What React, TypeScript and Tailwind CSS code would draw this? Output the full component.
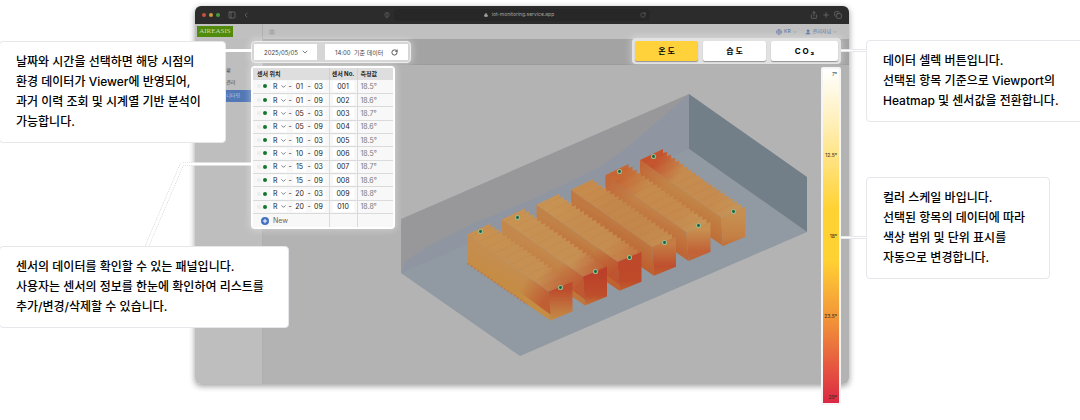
import { useState, type ReactNode } from 'react';
import {
  ChevronDown,
  ChevronLeft,
  Copy,
  Globe,
  Lock,
  Menu,
  PanelLeft,
  Plus,
  RotateCw,
  Share,
  ShieldHalf,
  User,
} from 'lucide-react';

interface Sensor {
  no: string;
  row: string;
  col: string;
  value: string;
}

const sensors: Sensor[] = [
  { no: '001', row: '01', col: '03', value: '18.5°' },
  { no: '002', row: '01', col: '09', value: '18.6°' },
  { no: '003', row: '05', col: '03', value: '18.7°' },
  { no: '004', row: '05', col: '09', value: '18.6°' },
  { no: '005', row: '10', col: '03', value: '18.5°' },
  { no: '006', row: '10', col: '09', value: '18.5°' },
  { no: '007', row: '15', col: '03', value: '18.7°' },
  { no: '008', row: '15', col: '09', value: '18.6°' },
  { no: '009', row: '20', col: '03', value: '18.8°' },
  { no: '010', row: '20', col: '09', value: '18.8°' },
];

const metrics = [
  { id: 'temperature', label: '온 도' },
  { id: 'humidity', label: '습 도' },
  { id: 'co2', label: 'C O ₂' },
];

const scaleLabels = ['7°', '12.5°', '18°', '23.5°', '29°'];

// rear block first, so that nearer blocks are painted over it
const blocks = [
  { back: '#c4532e', mid: '#c68b4e', front: '#c79457', side: '#c28548', faceTop: '#c68f50', faceBottom: '#c58045', base: '#bf7038' },
  { back: '#c66734', mid: '#c68a4d', front: '#c79457', side: '#c28146', faceTop: '#c78f50', faceBottom: '#c26236', base: '#bf6636' },
  { back: '#c78c4d', mid: '#c4874b', front: '#c58d50', side: '#bf7941', faceTop: '#c47c43', faceBottom: '#bf4f2e', base: '#be6131' },
  { back: '#c89352', mid: '#c68d50', front: '#c47742', side: '#c18247', faceTop: '#bd482b', faceBottom: '#be4a29', base: '#c0622f' },
  { back: '#c89352', mid: '#c69053', front: '#c16239', side: '#c4884c', faceTop: '#bb4029', faceBottom: '#be4f2c', base: '#c1763a' },
  { back: '#c8914f', mid: '#c69052', front: '#c1673b', side: '#c58d4e', faceTop: '#bd4b2c', faceBottom: '#c27a41', base: '#c58c42' },
];

const markers = [
  [653, 156], [619, 171], [517, 217], [480, 231], [733, 211],
  [698, 225], [664, 242], [629, 257], [595, 271], [560, 287],
];

const TEETH = 20;

// stepped edge that runs from the rear corner to the front right corner
function steppedEdge() {
  const points: string[] = [];
  for (let i = 0; i <= TEETH; i++) {
    const x = 663 + (82 * i) / TEETH;
    const y = 149 + (58 * i) / TEETH;
    points.push(`${x},${y}`);
    if (i < TEETH) points.push(`${x},${y + 4}`);
  }
  return points.join(' ');
}

function Heatmap() {
  const edge = steppedEdge();

  return (
    <svg
      viewBox="263 65 586 319"
      preserveAspectRatio="xMidYMid meet"
      className="absolute inset-0 h-full w-full"
      role="img"
      aria-label="온도 히트맵"
    >
      <defs>
        {blocks.map((b, i) => (
          <g key={i}>
            <linearGradient id={`top${i}`} gradientUnits="userSpaceOnUse" x1="650" y1="152" x2="735" y2="214">
              <stop offset="0.1" stopColor={b.back} />
              <stop offset="0.35" stopColor={b.mid} />
              <stop offset="0.75" stopColor={b.mid} />
              <stop offset="1" stopColor={b.front} />
            </linearGradient>
            <linearGradient id={`side${i}`} gradientUnits="userSpaceOnUse" x1="690" y1="190" x2="676" y2="216">
              <stop offset="0.2" stopColor={b.side} />
              <stop offset="1" stopColor={b.base} />
            </linearGradient>
            <linearGradient id={`face${i}`} x1="0" y1="0" x2="0" y2="1">
              <stop offset="0.2" stopColor={b.faceTop} />
              <stop offset="0.75" stopColor={b.faceBottom} />
              <stop offset="1" stopColor={b.base} />
            </linearGradient>
          </g>
        ))}
        <linearGradient id="heat" gradientUnits="userSpaceOnUse" x1="700" y1="202" x2="723" y2="217">
          <stop offset="0" stopColor="#bd4a2c" stopOpacity="0" />
          <stop offset="1" stopColor="#bd4a2c" stopOpacity="0.7" />
        </linearGradient>
        <linearGradient id="backHeat" gradientUnits="userSpaceOnUse" x1="640" y1="165" x2="668" y2="185">
          <stop offset="0" stopColor="#c25a30" stopOpacity="0.7" />
          <stop offset="1" stopColor="#c25a30" stopOpacity="0" />
        </linearGradient>
      </defs>

      {/* room */}
      <polygon points="401,219 689,94 689,149 401,273" fill="#98989b" />
      <polygon points="689,94 630,145 600,167 533,199 470,225 432,244 405,261 401,273 520,300 689,149" fill="#8f96a1" />
      <polygon points="401,273 689,149 807,232 520,356" fill="#9199a3" />
      <polygon points="689,94 807,177 807,232 689,149" fill="#727f88" />

      {/* rack blocks */}
      {blocks.map((b, i) => (
        <g key={i} transform={`translate(${-34.5 * i} ${14.9 * i})`}>
          <polygon points="640,160 721,217 723,246 640,189" fill={`url(#side${i})`} />
          <polygon points="721,217 745,207 745,237 723,246" fill={`url(#face${i})`} />
          <polygon points={`640,160 ${edge} 721,217`} fill={`url(#top${i})`} />
          {i > 2 && <polygon points="690,195 721,217 723,240 690,216" fill="url(#heat)" />}
          {i < 2 && <polygon points="640,160 675,184 675,206 640,183" fill="url(#backHeat)" />}
          {Array.from({ length: 20 }, (_, n) => (
            <path
              key={n}
              d={`M${643 + n * 4} ${162 + n * 2.8} l21 -10`}
              stroke={n % 2 ? '#d09a5b' : '#a9602f'}
              strokeWidth="0.7"
              opacity="0.12"
            />
          ))}
          <path d="M640 189 L700 230" stroke="#c45a2c" strokeWidth="2" strokeDasharray="2 2" opacity="0.35" />
        </g>
      ))}

      {markers.map(([x, y]) => (
        <g key={`${x}-${y}`}>
          <circle cx={x + 0.5} cy={y + 0.5} r="2.6" fill="#9fb889" />
          <circle cx={x + 0.5} cy={y + 0.5} r="1.4" fill="#126345" />
        </g>
      ))}
    </svg>
  );
}

function Callout({ lines, className = '' }: { lines: string[]; className?: string }) {
  return (
    <p
      className={`w-max rounded border border-gray-200 bg-white py-[10px] pl-4 text-xs leading-5 font-medium whitespace-nowrap text-black ${className}`}
    >
      {lines.map((line) => (
        <span key={line} className="block">
          {line}
        </span>
      ))}
    </p>
  );
}

function TitleBar() {
  return (
    <div className="flex h-[18px] items-center rounded-t-md bg-[#2c2c2c] px-[7px] text-[#757575]">
      <div className="flex flex-1 items-center">
        <div className="flex gap-[3px]">
          <span className="size-1 rounded-full bg-[#c9513f]" />
          <span className="size-1 rounded-full bg-[#c99a35]" />
          <span className="size-1 rounded-full bg-[#459b40]" />
        </div>
        <PanelLeft className="ml-2 size-2" />
        <ChevronLeft className="ml-[6px] size-2" />
        <ShieldHalf className="mr-1 ml-auto size-[6px]" />
      </div>
      <div className="flex h-3 w-[40%] items-center rounded-sm bg-[#272727] px-1">
        <div className="flex flex-1 items-center justify-center gap-1 text-[5px] text-[#a5a5a5]">
          <Lock className="size-1" fill="currentColor" />
          iot-monitoring.service.app
        </div>
        <RotateCw className="size-[6px]" />
      </div>
      <div className="flex flex-1 justify-end gap-1">
        <Share className="size-2" />
        <Plus className="size-2" />
        <Copy className="size-2" />
      </div>
    </div>
  );
}

function AppHeader() {
  return (
    <header className="flex h-[15px] items-center bg-[#c0c0c0] text-[5px] text-[#5671a5]">
      <div className="flex h-full w-[68px] items-center border-r border-[#b0b0b0] pl-[2px]">
        <span className="flex h-[11px] w-9 items-center justify-center bg-[#508b0c] font-['Liberation_Serif'] text-[7px] text-[#c9dcae]">
          AIREASIS
        </span>
      </div>
      <Menu className="ml-[6px] size-[6px] text-[#777]" />
      <div className="ml-auto flex items-center gap-2 pr-3">
        <span className="flex items-center gap-[2px]">
          <Globe className="size-[6px]" />
          KR
          <ChevronDown className="size-1" />
        </span>
        <span className="flex items-center gap-[2px]">
          <User className="size-[6px]" fill="currentColor" />
          관리자님
          <ChevronDown className="size-1" />
        </span>
      </div>
    </header>
  );
}

function Sidebar() {
  return (
    <nav className="w-[68px] shrink-0 rounded-bl-md border-r border-[#b0b0b0] bg-[#bebebe] pt-[26px] text-[5px] text-[#444]">
      <a href="#status" className="flex h-3 items-center pl-4">센서 현황</a>
      <a href="#manage" className="flex h-3 items-center pl-4">데이터 관리</a>
      <a href="#viewer" className="mt-px flex h-3 items-center bg-[#5277b5] pl-4 text-[#b9cae7]">센서 모니터링</a>
    </nav>
  );
}

function Highlight({ children, className = '' }: { children: ReactNode; className?: string }) {
  return (
    <div className={`relative rounded-sm shadow-[0_0_6px_2px_rgba(255,255,255,0.3)] ${className}`}>
      {children}
    </div>
  );
}

function Toolbar() {
  const [metric, setMetric] = useState('temperature');

  return (
    <div className="flex h-[26px] items-start justify-between border-b border-[#9c9c9c] bg-[#a3a3a3] pr-2">
      <Highlight className="mt-[2px] -ml-3 flex gap-2 border border-[#ededed] bg-[#d6d6d6] p-[2px]">
        <label className="relative flex items-center text-[#444]">
          <select
            aria-label="날짜"
            className="h-4 w-[63px] appearance-none bg-white pl-[10px] text-[6px]"
            defaultValue="2025/05/05"
          >
            <option>2025/05/05</option>
          </select>
          <ChevronDown className="pointer-events-none absolute right-2 size-2" />
        </label>
        <button type="button" className="flex h-4 items-center gap-2 bg-white px-[10px] text-[6px] text-[#444]">
          <span className="whitespace-pre">14:00  기준 데이터</span>
          <RotateCw className="size-[7px]" strokeWidth={3} />
        </button>
      </Highlight>
      <Highlight className="-mt-px flex gap-[5px] bg-[#e2e2e2] p-[3px]">
        {metrics.map((m) => (
          <button
            key={m.id}
            type="button"
            aria-pressed={metric === m.id}
            onClick={() => setMetric(m.id)}
            className={`h-5 w-[63px] rounded-xs text-[8px] font-bold text-black shadow-[0_1px_1px_rgba(0,0,0,0.35)] last:w-[67px] ${
              metric === m.id ? 'bg-[#ffd13b]' : 'bg-white'
            }`}
          >
            {m.label}
          </button>
        ))}
      </Highlight>
    </div>
  );
}

function SensorTable() {
  return (
    <Highlight className="-mt-px -ml-3 h-max border-2 border-white bg-white">
      <table className="h-[159px] w-[140px] table-fixed border-collapse bg-[#f8f8f8] text-[7px] leading-none text-[#222]">
        <thead>
          <tr className="h-3 bg-[#dedede] text-left text-[6px]">
            <th className="w-[76px] border-r border-[#cfcfcf] pl-1 font-bold">센서 위치</th>
            <th className="w-7 border-r border-[#cfcfcf] text-center font-bold">센서 No.</th>
            <th className="pl-[3px] font-bold">측정값</th>
          </tr>
        </thead>
        <tbody>
          {sensors.map((s) => (
            <tr key={s.no} className="h-[13px] border-b border-[#dadada]">
              <td className="border-r border-[#dadada] p-0">
                <div className="flex items-center pl-1">
                  <Menu className="size-1 text-[#ccc]" />
                  <span className="ml-[2px] size-1 rounded-full bg-[#13762b]" />
                  <label className="relative ml-1 flex items-center">
                    <select aria-label={`${s.no} 구역`} className="h-[10px] w-4 appearance-none bg-white pl-[2px]" defaultValue="R">
                      <option>R</option>
                      <option>L</option>
                    </select>
                    <ChevronDown className="pointer-events-none absolute right-0 size-[7px]" />
                  </label>
                  <span className="w-[6px] text-center">-</span>
                  <input aria-label={`${s.no} 행`} defaultValue={s.row} className="h-[10px] w-[13px] bg-white text-center" />
                  <span className="w-[6px] text-center">-</span>
                  <input aria-label={`${s.no} 열`} defaultValue={s.col} className="h-[10px] w-[13px] bg-white text-center" />
                </div>
              </td>
              <td className="border-r border-[#dadada] p-0">
                <input
                  aria-label={`${s.no} 번호`}
                  defaultValue={s.no}
                  className="mx-auto block h-[10px] w-[21px] bg-white text-center"
                />
              </td>
              <td className="py-0 pl-[3px] text-[#777]">{s.value}</td>
            </tr>
          ))}
          <tr className="h-[13px]">
            <td className="border-r border-[#dadada] p-0">
              <button type="button" className="flex items-center gap-1 pl-2 text-[#666]">
                <span className="flex size-2 items-center justify-center rounded-full bg-[#4470c4] text-white">
                  <Plus className="size-[6px]" strokeWidth={4} />
                </span>
                New
              </button>
            </td>
            <td className="border-r border-[#dadada]" />
            <td />
          </tr>
        </tbody>
      </table>
    </Highlight>
  );
}

function ColorScale() {
  return (
    <div className="relative mr-2 -mb-[21px] h-[338px] w-5 rounded-xs border-2 border-[#f5f5f5]">
      <div className="flex h-full flex-col items-end justify-between bg-[linear-gradient(#fff,#ffedb0_18%,#ffd233_42%,#ffd233_57%,#f08c3a_77%,#dc2844)] py-[3px] pr-[2px] text-[5px] leading-none text-[#33291a]">
        {scaleLabels.map((label) => (
          <span key={label}>{label}</span>
        ))}
      </div>
    </div>
  );
}

export default function App() {
  return (
    <div className="grid grid-cols-[195px_minmax(0,1fr)_231px] overflow-hidden bg-white pb-9 font-[Inter,'Noto_Sans_CJK_KR',sans-serif]">
      <aside className="relative z-10 pt-[41px]">
        <Callout
          className="relative -ml-px pr-6"
          lines={['날짜와 시간을 선택하면 해당 시점의', '환경 데이터가 Viewer에 반영되어,', '과거 이력 조회 및 시계열 기반 분석이', '가능합니다.']}
        />
        <Callout
          className="relative mt-[103px] -ml-px pr-6"
          lines={['센서의 데이터를 확인할 수 있는 패널입니다.', '사용자는 센서의 정보를 한눈에 확인하여 리스트를', '추가/변경/삭제할 수 있습니다.']}
        />
        <span className="absolute top-[49px] left-[224px] h-[3px] w-7 bg-white" />
        <svg className="absolute top-[162px] left-[145px] h-[84px] w-[106px]" viewBox="0 0 106 84" fill="none">
          <path d="M2 84 L37 2 H50" stroke="#c4c4c4" strokeWidth="4" strokeDasharray="1 1" />
          <path d="M2 84 L37 2 H106" stroke="#fff" strokeWidth="3" />
        </svg>
      </aside>

      <main className="mt-[6px] h-max rounded-md shadow-[0_2px_6px_rgba(0,0,0,0.4)]">
        <TitleBar />
        <AppHeader />
        <div className="flex">
          <Sidebar />
          <section className="min-w-0 flex-1">
            <Toolbar />
            <div className="relative flex items-start justify-between rounded-br-md bg-[#b3b3b3] pt-[2px]">
              <Heatmap />
              <SensorTable />
              <ColorScale />
            </div>
          </section>
        </div>
      </main>

      <aside className="relative z-10 pt-10 pl-[17px]">
        <Callout
          className="pr-6"
          lines={['데이터 셀렉 버튼입니다.', '선택된 항목 기준으로 Viewport의', 'Heatmap 및 센서값을 전환합니다.']}
        />
        <Callout
          className="mt-[55px] pr-6"
          lines={['컬러 스케일 바입니다.', '선택된 항목의 데이터에 따라', '색상 범위 및 단위 표시를', '자동으로 변경합니다.']}
        />
        <span className="absolute top-[49px] -left-2 h-[3px] w-[26px] border-y border-gray-200 bg-white" />
        <span className="absolute top-[236px] -left-2 h-[3px] w-[26px] border-y border-gray-200 bg-white" />
      </aside>
    </div>
  );
}
